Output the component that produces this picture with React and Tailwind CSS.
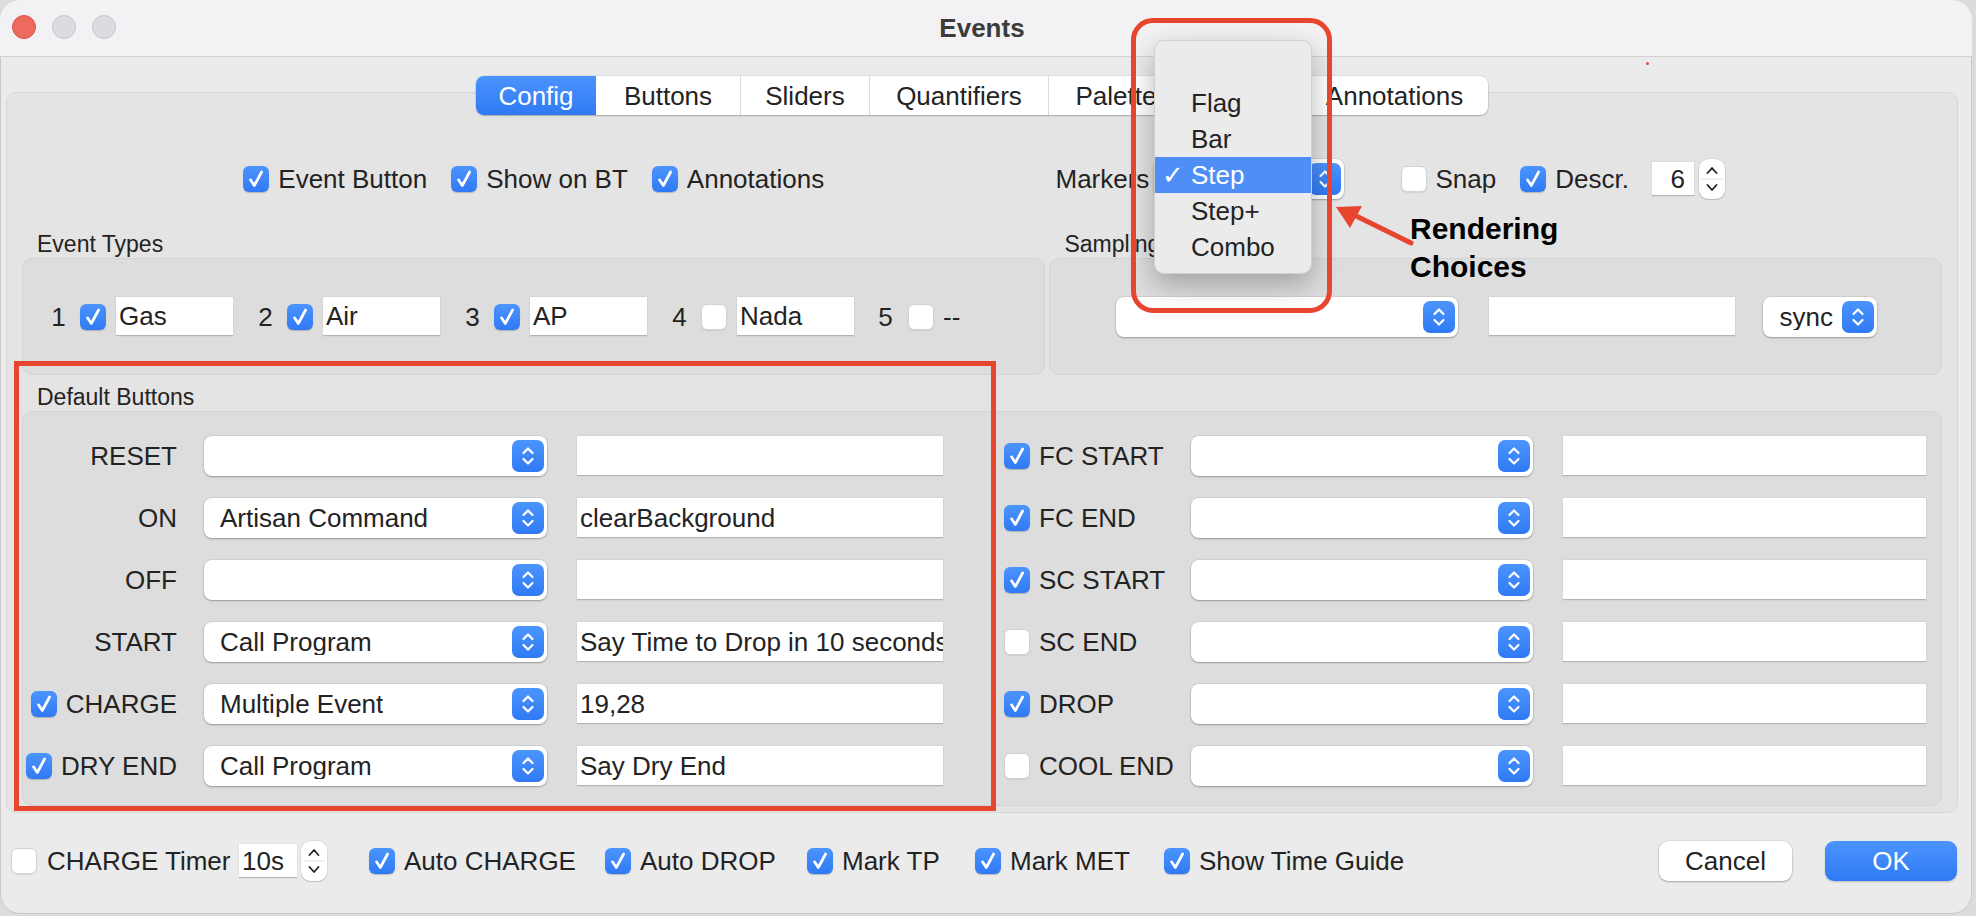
import React from 'react';

// macOS style controls
function Check({ on }) {
  if (!on) {
    return <span className="block h-[26px] w-[26px] shrink-0 rounded-[6px] border border-[#d2d2d2] bg-white shadow-[0_1px_1px_rgba(0,0,0,0.08)]" />;
  }
  return (
    <span className="flex h-[26px] w-[26px] shrink-0 items-center justify-center rounded-[6px] bg-linear-to-b from-[#4c94fd] to-[#2f7af4] shadow-[0_1px_1px_rgba(0,0,0,0.2)]">
      <svg width="26" height="26" viewBox="0 0 26 26">
        <path d="M7.5 13.8L11.3 19.5L18.6 6" fill="none" stroke="white" strokeWidth="2.7" strokeLinecap="round" strokeLinejoin="round" />
      </svg>
    </span>
  );
}

function BlueStep() {
  return (
    <span className="flex h-[32px] w-[32px] shrink-0 items-center justify-center rounded-[7px] bg-linear-to-b from-[#4c94fd] to-[#2f7af4]">
      <svg width="32" height="32" viewBox="0 0 32 32" fill="none" stroke="white" strokeWidth="2.2" strokeLinecap="round" strokeLinejoin="round">
        <path d="M11.5 13L16 8.5L20.5 13" />
        <path d="M11.5 19L16 23.5L20.5 19" />
      </svg>
    </span>
  );
}

function Combo({ value = '', className = '' }) {
  return (
    <div className={`flex h-[40px] shrink-0 items-center justify-between rounded-[8px] bg-white pl-[16px] pr-[3px] shadow-[0_0_0_1px_rgba(0,0,0,0.05),0_1px_2px_rgba(0,0,0,0.28)] ${className}`}>
      <span className="truncate">{value}</span>
      <BlueStep />
    </div>
  );
}

function Field({ value = '', className = '' }) {
  return (
    <div className={`flex shrink-0 items-center overflow-hidden whitespace-nowrap border-b-[1.5px] border-[#b4b4b4] bg-white px-[3px] shadow-[0_0_0_0.5px_rgba(0,0,0,0.07)] ${className}`}>
      {value}
    </div>
  );
}

function Spin() {
  return (
    <span className="flex h-[40px] w-[26px] shrink-0 rounded-[9px] bg-white shadow-[0_0_0_0.5px_rgba(0,0,0,0.12),0_1px_1px_rgba(0,0,0,0.15)]">
      <svg width="26" height="40" viewBox="0 0 26 40" fill="none" stroke="#222" strokeWidth="1.8" strokeLinecap="round" strokeLinejoin="round">
        <path d="M8.5 14L13 9L17.5 14" />
        <path d="M3 20H23" stroke="#dedede" strokeWidth="1" />
        <path d="M8.5 26L13 31L17.5 26" />
      </svg>
    </span>
  );
}

const tabs = [
  ['Config', 'w-[120px]'],
  ['Buttons', 'w-[144px]'],
  ['Sliders', 'w-[129px]'],
  ['Quantifiers', 'w-[179px]'],
  ['Palettes', 'w-[148px]'],
  ['Style', 'w-[104px]'],
  ['Annotations', 'w-[188px]'],
];

const leftRows = [
  { label: 'RESET', cb: null, combo: '', text: '' },
  { label: 'ON', cb: null, combo: 'Artisan Command', text: 'clearBackground' },
  { label: 'OFF', cb: null, combo: '', text: '' },
  { label: 'START', cb: null, combo: 'Call Program', text: 'Say Time to Drop in 10 seconds' },
  { label: 'CHARGE', cb: true, combo: 'Multiple Event', text: '19,28' },
  { label: 'DRY END', cb: true, combo: 'Call Program', text: 'Say Dry End' },
];

const rightRows = [
  { label: 'FC START', cb: true },
  { label: 'FC END', cb: true },
  { label: 'SC START', cb: true },
  { label: 'SC END', cb: false },
  { label: 'DROP', cb: true },
  { label: 'COOL END', cb: false },
];

const eventTypes = [
  ['1', true, 'Gas'],
  ['2', true, 'Air'],
  ['3', true, 'AP'],
  ['4', false, 'Nada'],
];

// bottom row checkboxes, label widths taken from the dialog
const bottomChecks = [
  ['Auto CHARGE', 'w-[167px]'],
  ['Auto DROP', 'w-[133px]'],
  ['Mark TP', 'w-[99px]'],
  ['Mark MET', 'w-[120px]'],
  ['Show Time Guide', 'w-[208px]'],
];

export default function App() {
  return (
    <div className="h-[916px] w-[1976px] overflow-hidden bg-[#dedcd8] font-['Liberation_Sans',Arial,sans-serif] text-[26px] leading-none text-[#232323]">
      <div className="relative flex h-[914px] w-[1972px] flex-col overflow-hidden rounded-[20px] bg-[#ebebeb] shadow-[inset_0_0_0_1px_#c9c9c9]">
        {/* title bar */}
        <div className="relative flex h-[57px] shrink-0 items-center justify-center border-b border-[#d3d3d3] bg-[#f2f1f4]">
          <div className="absolute left-[12px] top-[15px] flex gap-[16px]">
            <span className="h-[24px] w-[24px] rounded-full border border-[#d9544a] bg-[#ee6a5f]" />
            <span className="h-[24px] w-[24px] rounded-full border border-[#c6c5c9] bg-[#dcdbdf]" />
            <span className="h-[24px] w-[24px] rounded-full border border-[#c6c5c9] bg-[#dcdbdf]" />
          </div>
          <span className="ml-[-8px] font-bold text-[#3b3b3b]">Events</span>
        </div>

        {/* tab bar */}
        <div className="relative z-10 ml-[6px] mr-[14px] mt-[19px] flex h-[39px] shrink-0 justify-center">
          <div className="flex overflow-hidden rounded-[8px] bg-white shadow-[0_0_0_0.5px_rgba(0,0,0,0.12),0_1px_1.5px_rgba(0,0,0,0.22)]">
            {tabs.map(([t, w], i) => (
              <div
                key={t}
                className={`flex items-center justify-center ${w} ${i === 0 ? 'bg-linear-to-b from-[#4b93fd] to-[#2f7af4] text-white' : 'text-[#232323]'} ${i > 1 ? 'border-l border-[#dadada]' : ''}`}
              >
                {t}
              </div>
            ))}
          </div>
        </div>

        {/* tab pane */}
        <div className="-mt-[23px] ml-[6px] mr-[14px] flex h-[721px] shrink-0 flex-col rounded-[10px] border border-[#d6d6d6] bg-[#e4e4e4] px-[15px] pt-[66px]">
          <div className="flex gap-[4px]">
            <div className="flex w-[1024px] flex-col">
              <div className="flex h-[40px] items-center justify-center">
                <Check on />
                <span className="ml-[9px]">Event Button</span>
                <span className="ml-[24px]"><Check on /></span>
                <span className="ml-[9px]">Show on BT</span>
                <span className="ml-[24px]"><Check on /></span>
                <span className="ml-[9px]">Annotations</span>
              </div>
              <div className="mt-[31px] flex h-[28px] items-center pl-[15px] text-[23px]">Event Types</div>
              <div className="flex h-[117px] items-center rounded-[10px] border border-[#d3d3d3] bg-[#dddddd] pl-[28px]">
                {eventTypes.map(([n, on, v], i) => (
                  <div key={n} className={`flex items-center ${i > 0 ? 'ml-[25px]' : ''}`}>
                    <span className="w-[15px] text-center">{n}</span>
                    <span className="ml-[14px]"><Check on={on} /></span>
                    <Field value={v} className="ml-[10px] h-[39px] w-[117px]" />
                  </div>
                ))}
                <div className="ml-[24px] flex items-center">
                  <span className="w-[15px] text-center">5</span>
                  <span className="ml-[15px]"><Check on={false} /></span>
                  <span className="ml-[9px]">--</span>
                </div>
              </div>
            </div>

            <div className="flex w-[893px] flex-col">
              <div className="flex h-[40px] items-center pl-[6px]">
                <span className="w-[94px] whitespace-nowrap">Markers</span>
                <Combo value="Step" className="ml-[5px] w-[190px]" />
                <span className="ml-[57px]"><Check on={false} /></span>
                <span className="ml-[8px]">Snap</span>
                <span className="ml-[24px]"><Check on /></span>
                <span className="ml-[9px]">Descr.</span>
                <Field value="6" className="ml-[23px] h-[34px] w-[42px] justify-end pr-[9px]" />
                <span className="ml-[5px]"><Spin /></span>
              </div>
              <div className="mt-[31px] flex h-[28px] items-center pl-[15px] text-[23px]">Sampling</div>
              <div className="flex h-[117px] items-center rounded-[10px] border border-[#d3d3d3] bg-[#dddddd] pl-[66px]">
                <Combo className="w-[342px]" />
                <Field className="ml-[31px] h-[39px] w-[246px]" />
                <Combo value="sync" className="ml-[28px] w-[114px] pl-[12px]" />
              </div>
            </div>
          </div>

          <div className="mt-[9px] flex h-[27px] items-center pl-[15px] text-[23px]">Default Buttons</div>
          <div className="flex h-[395px] rounded-[10px] border border-[#d3d3d3] bg-[#dddddd] pt-[24px]">
            <div className="flex w-[981px] flex-col gap-[22px]">
              {leftRows.map((r) => (
                <div key={r.label} className="flex h-[40px] items-center">
                  <div className="flex w-[154px] items-center justify-end">
                    {r.cb !== null && <span className="mr-[9px]"><Check on={r.cb} /></span>}
                    <span>{r.label}</span>
                  </div>
                  <Combo value={r.combo} className="ml-[27px] w-[343px]" />
                  <Field value={r.text} className="ml-[30px] h-[40px] w-[366px]" />
                </div>
              ))}
            </div>
            <div className="flex flex-col gap-[22px]">
              {rightRows.map((r) => (
                <div key={r.label} className="flex h-[40px] items-center">
                  <div className="flex w-[187px] items-center">
                    <Check on={r.cb} />
                    <span className="ml-[9px]">{r.label}</span>
                  </div>
                  <Combo className="w-[342px]" />
                  <Field className="ml-[30px] h-[40px] w-[363px]" />
                </div>
              ))}
            </div>
          </div>
        </div>

        {/* bottom row */}
        <div className="mt-[28px] flex h-[40px] shrink-0 items-center pl-[11px] pr-[15px]">
          <Check on={false} />
          <span className="ml-[10px] w-[179px] whitespace-nowrap">CHARGE Timer</span>
          <Field value="10s" className="ml-[13px] h-[34px] w-[58px]" />
          <span className="ml-[4px]"><Spin /></span>
          {bottomChecks.map(([t, w], i) => (
            <div key={t} className={`flex items-center ${i === 0 ? 'ml-[42px]' : 'ml-[34px]'}`}>
              <Check on />
              <span className={`ml-[9px] whitespace-nowrap ${w}`}>{t}</span>
            </div>
          ))}
          <div className="ml-auto flex h-[40px] w-[133px] items-center justify-center rounded-[9px] bg-white shadow-[0_0_0_0.5px_rgba(0,0,0,0.12),0_1px_2px_rgba(0,0,0,0.25)]">Cancel</div>
          <div className="ml-[33px] flex h-[40px] w-[132px] items-center justify-center rounded-[9px] bg-linear-to-b from-[#4b93fd] to-[#2f7af4] text-white shadow-[0_1px_2px_rgba(0,0,0,0.2)]">OK</div>
        </div>

        {/* popup menu opened from Markers */}
        <div className="absolute left-[1154px] top-[40px] z-20 flex w-[158px] flex-col rounded-[10px] border border-[#cfcfcf] bg-[#ebebeb] py-[8px] shadow-[0_10px_28px_rgba(0,0,0,0.28)]">
          <div className="h-[36px]" />
          {['Flag', 'Bar', 'Step', 'Step+', 'Combo'].map((it) => (
            <div
              key={it}
              className={`relative flex h-[36px] items-center pl-[36px] ${it === 'Step' ? 'bg-[#4f8ef7] text-white' : ''}`}
            >
              {it === 'Step' && <span className="absolute left-[7px] top-[5px]">✓</span>}
              {it}
            </div>
          ))}
        </div>

        {/* red annotations */}
        <div className="absolute left-[1131px] top-[18px] z-30 h-[295px] w-[201px] rounded-[22px] border-[5px] border-[#e8452f]" />
        <div className="absolute left-[14px] top-[361px] z-30 h-[450px] w-[982px] border-[5px] border-[#e8452f]" />
        <svg className="absolute left-[1330px] top-[200px] z-30" width="90" height="50" viewBox="0 0 90 50">
          <path d="M81 43L14 10" stroke="#e8452f" strokeWidth="5" strokeLinecap="round" />
          <path d="M6 7L32 6L20 28Z" fill="#e8452f" />
        </svg>
        <div className="absolute left-[1410px] top-[210px] z-30 text-[30px] font-bold leading-[38px] text-black">
          Rendering
          <br />
          Choices
        </div>
        <span className="absolute left-[1646px] top-[62px] h-[3px] w-[3px] rounded-full bg-[#e8452f]" />
      </div>
    </div>
  );
}
